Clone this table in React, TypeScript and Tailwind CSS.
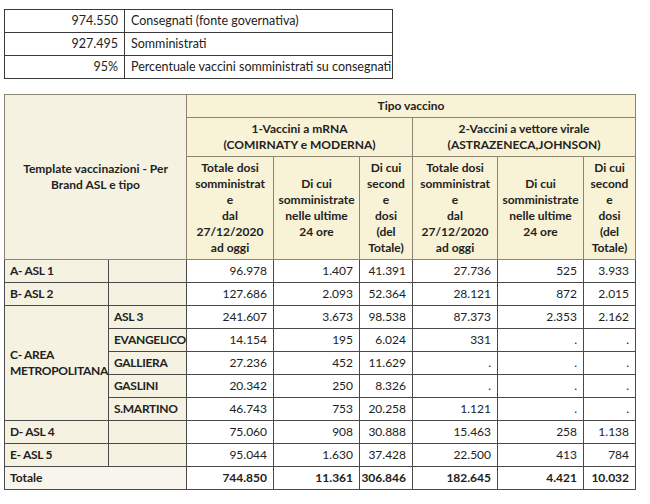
import React from 'react';

// ── Data ─────────────────────────────────────────────────

const SUMMARY = [
  { value: '974.550', label: 'Consegnati (fonte governativa)' },
  { value: '927.495', label: 'Somministrati' },
  { value: '95%', label: 'Percentuale vaccini somministrati su consegnati' },
];

type Row = { group?: string[]; sub?: string; span?: number; values: string[] };

const ROWS: Row[] = [
  { group: ['A- ASL 1'], sub: '', values: ['96.978', '1.407', '41.391', '27.736', '525', '3.933'] },
  { group: ['B- ASL 2'], sub: '', values: ['127.686', '2.093', '52.364', '28.121', '872', '2.015'] },
  { group: ['C- AREA', 'METROPOLITANA'], span: 5, sub: 'ASL 3', values: ['241.607', '3.673', '98.538', '87.373', '2.353', '2.162'] },
  { sub: 'EVANGELICO', values: ['14.154', '195', '6.024', '331', '.', '.'] },
  { sub: 'GALLIERA', values: ['27.236', '452', '11.629', '.', '.', '.'] },
  { sub: 'GASLINI', values: ['20.342', '250', '8.326', '.', '.', '.'] },
  { sub: 'S.MARTINO', values: ['46.743', '753', '20.258', '1.121', '.', '.'] },
  { group: ['D- ASL 4'], sub: '', values: ['75.060', '908', '30.888', '15.463', '258', '1.138'] },
  { group: ['E- ASL 5'], sub: '', values: ['95.044', '1.630', '37.428', '22.500', '413', '784'] },
];

const TOTALS = ['744.850', '11.361', '306.846', '182.645', '4.421', '10.032'];

const HEAD_TOTAL = ['Totale dosi', 'somministrat', 'e', 'dal', '27/12/2020', 'ad oggi'];
const HEAD_24H = ['Di cui', 'somministrate', 'nelle ultime', '24 ore'];
const HEAD_SECOND = ['Di cui', 'second', 'e', 'dosi', '(del', 'Totale)'];

const Lines = ({ lines }: { lines: string[] }) => (
  <>
    {lines.map((l, i) => (
      <div key={i}>{l}</div>
    ))}
  </>
);

const th = 'border border-[#8a8470] bg-[#f8f2d6] font-bold text-center align-middle p-0 whitespace-nowrap';
const td = 'border border-[#4a4a4a] bg-white text-right pr-[6px] h-[23px] p-0 whitespace-nowrap';
const lbl = 'border border-[#4a4a4a] bg-[#f5f2e2] font-bold text-left pl-[5px] h-[23px] p-0 whitespace-nowrap tracking-[-0.3px]';

export default function App() {
  return (
    <div className="w-[650px] h-[504px] bg-white text-[12px] leading-[16px] text-[#222]" style={{ fontFamily: 'Lato, "Open Sans", sans-serif' }}>
      <div className="pt-[9px] pl-[4px]">
        {/* ── Summary table ─────────────────────────────── */}
        <table className="border-collapse table-fixed w-[389px] text-[12.5px]">
          <colgroup>
            <col className="w-[120px]" />
            <col />
          </colgroup>
          <tbody>
            {SUMMARY.map((r) => (
              <tr key={r.label} className="h-[23px]">
                <td className="border border-[#3a3a3a] text-right pr-[6px] p-0 whitespace-nowrap">{r.value}</td>
                <td className="border border-[#3a3a3a] text-left pl-[6px] p-0 whitespace-nowrap">{r.label}</td>
              </tr>
            ))}
          </tbody>
        </table>

        {/* ── Main table ────────────────────────────────── */}
        <table className="border-collapse table-fixed w-[631px] mt-[15px]">
          <colgroup>
            <col className="w-[104px]" />
            <col className="w-[78px]" />
            <col className="w-[87px]" />
            <col className="w-[86px]" />
            <col className="w-[53px]" />
            <col className="w-[85px]" />
            <col className="w-[86px]" />
            <col className="w-[52px]" />
          </colgroup>
          <thead>
            <tr className="h-[23px]">
              <th colSpan={2} rowSpan={3} className="border border-[#8a8470] bg-[#f5f2e2] font-bold text-center align-middle">
                <Lines lines={['Template vaccinazioni - Per', 'Brand ASL e tipo']} />
              </th>
              <th colSpan={6} className={th}>Tipo vaccino</th>
            </tr>
            <tr className="h-[39px]">
              <th colSpan={3} className={th}>
                <Lines lines={['1-Vaccini a mRNA', '(COMIRNATY e MODERNA)']} />
              </th>
              <th colSpan={3} className={th}>
                <Lines lines={['2-Vaccini a vettore virale', '(ASTRAZENECA,JOHNSON)']} />
              </th>
            </tr>
            <tr className="h-[103px]">
              <th className={th}><Lines lines={HEAD_TOTAL} /></th>
              <th className={th}><Lines lines={HEAD_24H} /></th>
              <th className={th}><Lines lines={HEAD_SECOND} /></th>
              <th className={th}><Lines lines={HEAD_TOTAL} /></th>
              <th className={th}><Lines lines={HEAD_24H} /></th>
              <th className={th}><Lines lines={HEAD_SECOND} /></th>
            </tr>
          </thead>
          <tbody>
            {ROWS.map((r, i) => (
              <tr key={i}>
                {r.group !== undefined && (
                  <td rowSpan={r.span ?? 1} className={lbl}>
                    <Lines lines={r.group} />
                  </td>
                )}
                <td className={lbl}>{r.sub}</td>
                {r.values.map((v, j) => (
                  <td key={j} className={td}>{v}</td>
                ))}
              </tr>
            ))}
            <tr>
              <td colSpan={2} className="border border-[#4a4a4a] bg-[#f8f6ec] font-bold text-left pl-[5px] h-[23px] p-0">Totale</td>
              {TOTALS.map((v, j) => (
                <td key={j} className={`${td} font-bold`}>{v}</td>
              ))}
            </tr>
          </tbody>
        </table>
      </div>
    </div>
  );
}
